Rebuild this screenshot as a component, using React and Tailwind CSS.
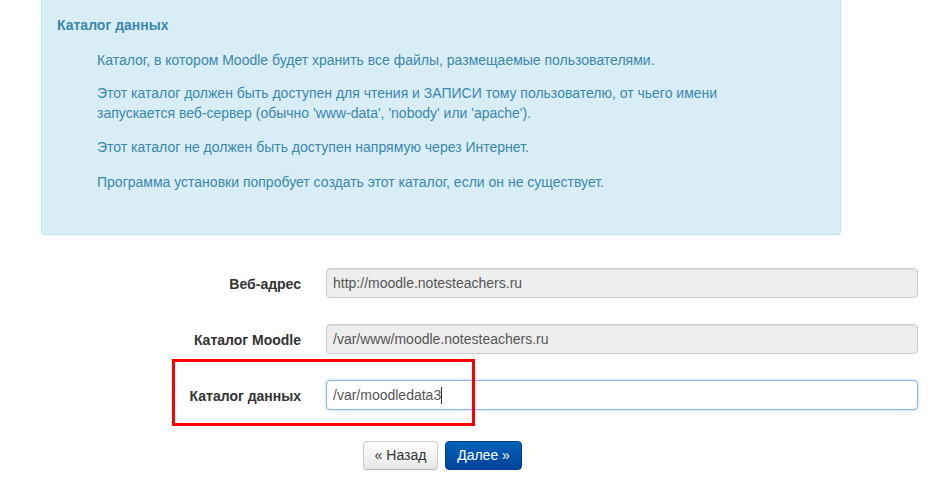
export default function App() {
  const rows = [
    { label: 'Веб-адрес', value: 'http://moodle.notesteachers.ru', readOnly: true },
    { label: 'Каталог Moodle', value: '/var/www/moodle.notesteachers.ru', readOnly: true },
    { label: 'Каталог данных', value: '/var/moodledata3', readOnly: false },
  ];

  return (
    <div className="relative w-[949px] h-[503px] bg-white overflow-hidden font-['Liberation_Sans',Arial,sans-serif]">
      {/* информационный блок */}
      <div className="ml-[41px] w-[800px] h-[235px] bg-[#d9edf7] border border-t-0 border-[#bce8f1] rounded-b-[4px] text-[#3a87ad] pt-[15px] pl-[15px] pr-[15px]">
        <h3 className="text-[14px] leading-[20px] font-bold">Каталог данных</h3>
        <div className="ml-[40px] mt-[15px] text-[14px] leading-[20px]">
          <p>Каталог, в котором Moodle будет хранить все файлы, размещаемые пользователями.</p>
          <p className="mt-[13px]">
            Этот каталог должен быть доступен для чтения и ЗАПИСИ тому пользователю, от чьего имени
            <br />
            запускается веб-сервер (обычно 'www-data', 'nobody' или 'apache').
          </p>
          <p className="mt-[14px]">Этот каталог не должен быть доступен напрямую через Интернет.</p>
          <p className="mt-[15px]">Программа установки попробует создать этот каталог, если он не существует.</p>
        </div>
      </div>

      {/* форма */}
      <div className="mt-[33px] flex flex-col gap-[26px]">
        {rows.map(r => (
          <div key={r.label} className="flex items-center">
            <div className="w-[301px] pt-[2px] text-right text-[14px] font-bold text-[#333]">{r.label}</div>
            <div
              className={`ml-[25px] w-[592px] h-[30px] rounded-[4px] border px-[6px] flex items-center text-[14px] text-[#555] ${
                r.readOnly
                  ? 'bg-[#eeeeee] border-[#cccccc] shadow-[inset_0_1px_1px_rgba(0,0,0,0.075)]'
                  : 'bg-white border-[#8fb1ea] shadow-[0_0_3px_rgba(82,168,236,0.5)]'
              }`}
            >
              {r.value}
              {!r.readOnly && <span className="inline-block w-px h-[17px] bg-[#333]" />}
            </div>
          </div>
        ))}
      </div>

      {/* кнопки */}
      <div className="mt-[31px] ml-[363px] flex gap-[7px]">
        <button className="w-[75px] h-[29px] rounded-[4px] border border-[#cccccc] border-b-[#b3b3b3] bg-[linear-gradient(#ffffff,#e6e6e6)] text-[14px] text-[#333] shadow-[0_1px_2px_rgba(0,0,0,0.05)]">
          « Назад
        </button>
        <button className="w-[77px] h-[29px] rounded-[4px] border border-[#003d96] bg-[linear-gradient(#0062b8,#00429c)] text-[14px] text-white">
          Далее »
        </button>
      </div>

      {/* красная рамка-аннотация */}
      <div className="absolute left-[172px] top-[359px] w-[303px] h-[67px] border-[3px] border-[#ff0000]" />
    </div>
  );
}
